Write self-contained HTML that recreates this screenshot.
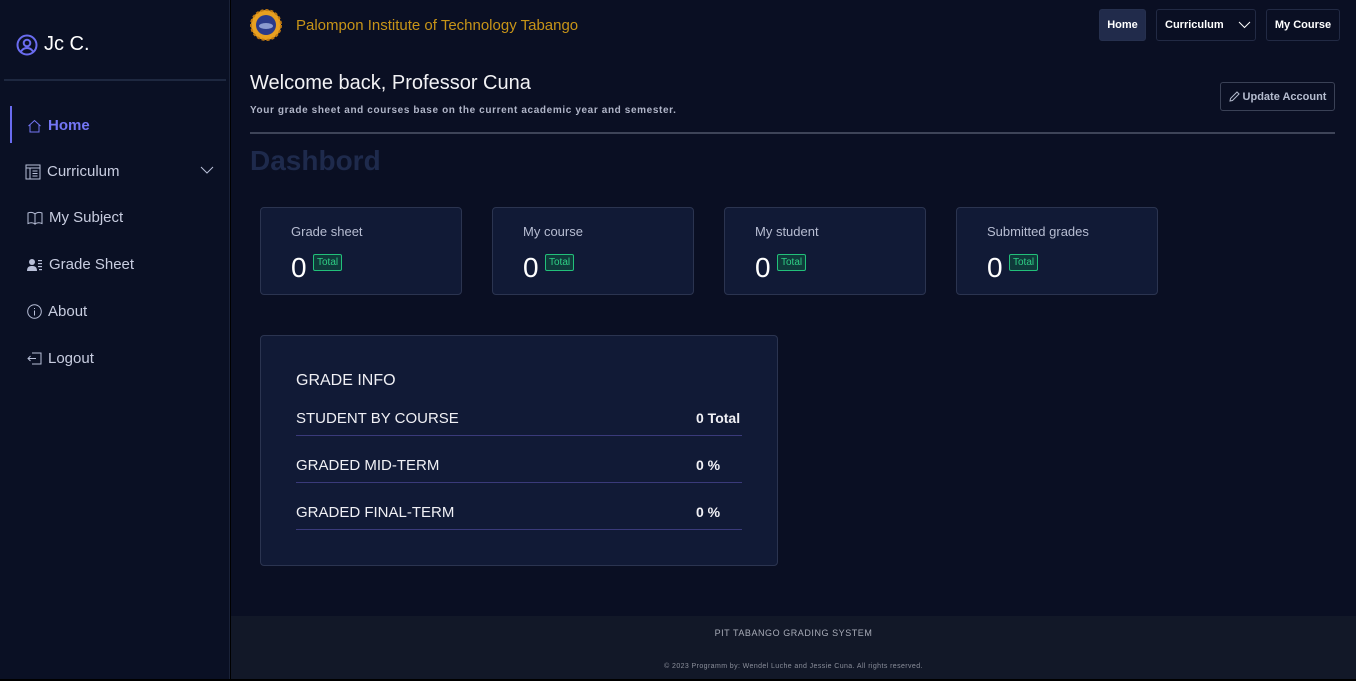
<!DOCTYPE html>
<html><head><meta charset="utf-8"><style>
*{box-sizing:border-box;margin:0;padding:0}
body{width:1356px;height:681px;background:#000;font-family:"Liberation Sans",sans-serif;position:relative;overflow:hidden}
.side{position:absolute;left:0;top:0;width:230px;height:679px;background:#0a1024;border-right:1px solid #1a2238}
.main{position:absolute;left:231px;top:0;width:1125px;height:679px;background:#0a0f23}
.abs{position:absolute}
.nav{position:absolute;left:25px;color:#c8cde0;font-size:15px;display:flex;align-items:center;gap:6px}
.card{position:absolute;top:207px;width:202px;height:88px;background:#111a36;border:1px solid #2b3450;border-radius:4px}
.card .t{position:absolute;left:30px;top:16px;color:#b7bdd2;font-size:13px}
.card .n{position:absolute;left:30px;top:44px;color:#fff;font-size:28px}
.card .b{position:absolute;left:52px;top:46px;border:1px solid #22c07a;background:#0f3a3a;color:#2fcf85;font-size:10px;padding:2px 3px;border-radius:2px}
.row{position:absolute;left:35px;width:446px;height:1px;background:#3a3a7a}
.rt{position:absolute;left:35px;color:#f0f0f5;font-size:15px}
.rv{position:absolute;left:435px;color:#f0f0f5;font-size:14px;font-weight:bold}
.btn{position:absolute;top:9px;height:32px;border:1px solid #222a44;border-radius:3px;color:#fff;font-size:11px;font-weight:bold;display:flex;align-items:center;justify-content:center}
</style></head><body>
<div class="side">
 <div class="abs" style="left:16px;top:33px;display:flex;align-items:center;gap:6px;color:#fff;font-size:20px">
  <svg width="22" height="22" viewBox="0 0 22 22" fill="none" stroke="#6a6cf0" stroke-width="2"><circle cx="11" cy="11" r="9.5"/><circle cx="11" cy="9" r="3.3"/><path d="M5 17.5c1.5-2.5 3.5-3.5 6-3.5s4.5 1 6 3.5"/></svg>Jc C.</div>
 <div class="abs" style="left:4px;top:79px;width:222px;height:2px;background:#1e2840"></div>
 <div class="abs" style="left:10px;top:106px;width:2px;height:37px;background:#6a6cf0"></div>
 <div class="nav" style="top:117px;left:27px;color:#7476f5;font-weight:bold"><svg width="15" height="14" viewBox="0 0 15 14" fill="none" stroke="#7476f5"><path d="M1.5 7L7.5 1.5L13.5 7M3 6v7h9V6"/></svg>Home</div>
 <div class="nav" style="top:163px"><svg width="16" height="16" viewBox="0 0 16 16" fill="none" stroke="#b8bfd8"><rect x="1" y="1" width="14" height="14"/><path d="M1 4h14M5 4v11M7.5 7h5M7.5 9.5h5M7.5 12h5"/></svg>Curriculum</div>
 <svg class="abs" style="left:200px;top:166px" width="14" height="9" viewBox="0 0 14 9" fill="none" stroke="#b8bfd8"><path d="M1 1l6 6 6-6"/></svg>
 <div class="nav" style="top:209px;left:27px"><svg width="16" height="14" viewBox="0 0 16 14" fill="none" stroke="#b8bfd8"><path d="M1 2c2.5-1 5-1 7 1v10c-2-1.5-4.5-1.5-7-.5zM15 2c-2.5-1-5-1-7 1v10c2-1.5 4.5-1.5 7-.5z"/></svg>My Subject</div>
 <div class="nav" style="top:256px;left:27px"><svg width="16" height="14" viewBox="0 0 16 14" fill="#b8bfd8"><circle cx="5" cy="4" r="3"/><path d="M0 13c0-4 2-5 5-5s5 1 5 5z"/><rect x="11" y="2" width="4" height="1.2"/><rect x="11" y="5" width="4" height="1.2"/><rect x="11" y="8" width="4" height="1.2"/><rect x="12" y="11" width="3" height="1.2"/></svg>Grade Sheet</div>
 <div class="nav" style="top:303px;left:27px"><svg width="15" height="15" viewBox="0 0 15 15" fill="none" stroke="#b8bfd8"><circle cx="7.5" cy="7.5" r="6.8"/><path d="M7.5 6.5v5M7.5 4v1"/></svg>About</div>
 <div class="nav" style="top:350px;left:27px"><svg width="15" height="13" viewBox="0 0 15 13" fill="none" stroke="#b8bfd8"><path d="M5 1h9v11H5M1 6.5h8M3.5 4L1 6.5 3.5 9"/></svg>Logout</div>
</div>
<div class="main">
 <svg class="abs" style="left:19px;top:9px" width="32" height="32" viewBox="0 0 32 32"><circle cx="16" cy="16" r="15" fill="#e8a020" stroke="#c07810" stroke-dasharray="3 2" stroke-width="2"/><circle cx="16" cy="16" r="10" fill="#2a3a8a"/><ellipse cx="16" cy="17" rx="7" ry="3" fill="#8a9ad0"/></svg>
 <div class="abs" style="left:65px;top:17px;color:#c79418;font-size:15px">Palompon Institute of Technology Tabango</div>
 <div class="btn" style="left:868px;width:47px;background:#212b4b;border-color:#26304e">Home</div>
 <div class="btn" style="left:925px;width:100px;justify-content:flex-start;padding-left:8px">Curriculum<svg style="margin-left:14px" width="13" height="8" viewBox="0 0 13 8" fill="none" stroke="#fff"><path d="M1 1l5.5 5.5L12 1"/></svg></div>
 <div class="btn" style="left:1035px;width:74px">My Course</div>
 <div class="abs" style="left:19px;top:72px;color:#f2f2f5;font-size:20px">Welcome back, Professor Cuna</div>
 <div class="abs" style="left:19px;top:105px;color:#b0b5c8;font-size:10px;font-weight:bold;letter-spacing:0.62px">Your grade sheet and courses base on the current academic year and semester.</div>
 <div class="abs" style="left:989px;top:82px;width:115px;height:29px;border:1px solid #3a4156;border-radius:3px;color:#b5bccf;font-size:11px;font-weight:bold;display:flex;align-items:center;justify-content:center;gap:3px"><svg width="11" height="11" viewBox="0 0 11 11" fill="none" stroke="#b5bccf"><path d="M1 10l.5-2.5L8 1l2 2-6.5 6.5z"/></svg>Update Account</div>
 <div class="abs" style="left:19px;top:132px;width:1085px;height:2px;background:#3e4458"></div>
 <div class="abs" style="left:19px;top:145px;color:#1e2a4c;font-size:28px;font-weight:bold">Dashbord</div>
 <div class="card" style="left:29px"><div class="t">Grade sheet</div><div class="n">0</div><div class="b">Total</div></div>
 <div class="card" style="left:261px"><div class="t">My course</div><div class="n">0</div><div class="b">Total</div></div>
 <div class="card" style="left:493px"><div class="t">My student</div><div class="n">0</div><div class="b">Total</div></div>
 <div class="card" style="left:725px"><div class="t">Submitted grades</div><div class="n">0</div><div class="b">Total</div></div>
 <div class="abs" style="left:29px;top:335px;width:518px;height:231px;background:#111a36;border:1px solid #2b3450;border-radius:4px">
  <div class="rt" style="top:36px;font-size:16px">GRADE INFO</div>
  <div class="rt" style="top:74px">STUDENT BY COURSE</div><div class="rv" style="top:74px">0 Total</div><div class="row" style="top:99px"></div>
  <div class="rt" style="top:121px">GRADED MID-TERM</div><div class="rv" style="top:121px">0 %</div><div class="row" style="top:146px"></div>
  <div class="rt" style="top:168px">GRADED FINAL-TERM</div><div class="rv" style="top:168px">0 %</div><div class="row" style="top:193px"></div>
 </div>
 <div class="abs" style="left:0;top:616px;width:1125px;height:63px;background:#121828">
  <div class="abs" style="left:0;width:100%;top:12px;text-align:center;color:#a8acb8;font-size:9px;letter-spacing:0.55px">PIT TABANGO GRADING SYSTEM</div>
  <div class="abs" style="left:0;width:100%;top:47px;text-align:center;color:#8a8e9a;font-size:7px;letter-spacing:0.4px">© 2023 Programm by: Wendel Luche and Jessie Cuna. All rights reserved.</div>
 </div>
</div>
</body></html>
